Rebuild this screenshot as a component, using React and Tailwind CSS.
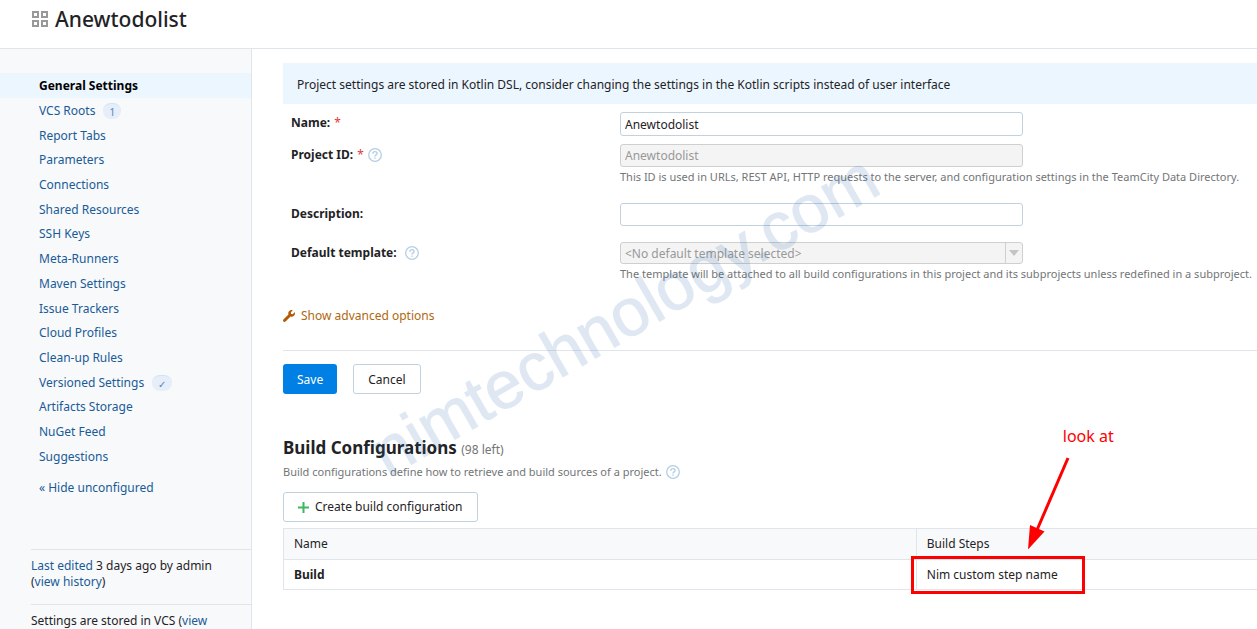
const navItems = [
  { label: 'General Settings', active: true },
  { label: 'VCS Roots', badge: '1' },
  { label: 'Report Tabs' },
  { label: 'Parameters' },
  { label: 'Connections' },
  { label: 'Shared Resources' },
  { label: 'SSH Keys' },
  { label: 'Meta-Runners' },
  { label: 'Maven Settings' },
  { label: 'Issue Trackers' },
  { label: 'Cloud Profiles' },
  { label: 'Clean-up Rules' },
  { label: 'Versioned Settings', badge: '✓' },
  { label: 'Artifacts Storage' },
  { label: 'NuGet Feed' },
  { label: 'Suggestions' },
]

const inputClass = 'block w-[403px] max-w-full rounded-[3px] border px-1'

const ProjectIcon = () => (
  <svg width="17" height="17" viewBox="0 0 17 17" fill="none" stroke="#999" strokeWidth="2" aria-hidden="true">
    <rect x="1" y="1" width="5" height="5" />
    <rect x="10" y="1" width="5" height="5" />
    <rect x="1" y="10" width="5" height="5" />
    <rect x="10" y="10" width="5" height="5" />
  </svg>
)

const HelpIcon = () => (
  <svg width="14" height="14" viewBox="0 0 14 14" fill="none" stroke="#b4cee4" aria-hidden="true">
    <circle cx="7" cy="7" r="6.3" strokeWidth="1.3" />
    <path d="M4.900 5.700c0-1.300.9-2.100 2.100-2.100s2.100.8 2.100 1.900c0 1.500-2.100 1.400-2.100 3" strokeWidth="1.4" />
    <path d="M7 9.400v1.400" strokeWidth="1.5" />
  </svg>
)

const WrenchIcon = () => (
  <svg width="12" height="12" viewBox="0 0 512 512" fill="#b35a00" aria-hidden="true">
    <path d="M507.700 109.100c-2.200-9-13.500-12.100-20.100-5.500l-74.400 74.400-67.900-11.300-11.300-67.900 74.400-74.400c6.600-6.600 3.400-17.900-5.700-20.200-47.400-11.700-99.600.9-136.600 37.900-39.600 39.600-50.500 97.100-34.100 147.200L18.700 402.800c-25 25-25 65.500 0 90.500s65.500 25 90.500 0l213.200-213.200c50.100 16.700 107.500 5.700 147.400-34.200 37.100-37.100 49.700-89.300 37.900-136.800z" />
  </svg>
)

const HelpButton = ({ label }) => (
  <button type="button" aria-label={label} className="inline-flex">
    <HelpIcon />
  </button>
)

const Sidebar = () => (
  <aside className="flex w-[252px] shrink-0 flex-col border-r border-[#dfe5eb] bg-[#f7f9fb] pt-6">
    <ul className="grid h-[395px]">
      {navItems.map((item) => (
        <li key={item.label} className={`flex items-center gap-2 pt-0.5 pl-[39px] ${item.active ? 'bg-[#ebf6ff]' : ''}`}>
          <a href="#" className={item.active ? 'font-bold text-black' : 'text-[#1a5b97]'}>
            {item.label}
          </a>
          {item.badge && (
            <span className="h-4 rounded-full border-t border-[#d3e2f3] bg-[#e5eef9] px-1.5 text-[10px] leading-4 text-[#5c82b8]">
              {item.badge}
            </span>
          )}
        </li>
      ))}
    </ul>
    <a href="#" className="mt-2.5 pl-[39px] leading-5 text-[#1a5b97]">
      « Hide unconfigured
    </a>
    <div className="mt-[51px] ml-[31px] border-t border-[#dfe5eb] pt-2 pb-3.5 leading-4">
      <a href="#" className="text-[#1a5b97]">Last edited</a> 3 days ago by admin
      <br />(<a href="#" className="text-[#1a5b97]">view history</a>)
    </div>
    <div className="ml-[31px] border-t border-[#dfe5eb] pt-2 leading-4">
      Settings are stored in VCS (<a href="#" className="text-[#1a5b97]">view</a>
    </div>
  </aside>
)

const Field = ({ id, label, required, help, note, className, children }) => (
  <div className={`flex pl-2 ${className}`}>
    <div className="flex h-[22px] w-[329px] shrink-0 items-center">
      <label htmlFor={id} className="font-bold">{label}</label>
      {required && <span className="px-1 text-[#e03a3a]">*</span>}
      {help && (
        <span className={required ? 'flex' : 'flex pl-2'}>
          <HelpButton label={`Help: ${label}`} />
        </span>
      )}
    </div>
    <div className="min-w-0 flex-1">
      {children}
      {note && <p className="pt-0.5 text-[11px] leading-4 whitespace-nowrap text-[#737577]">{note}</p>}
    </div>
  </div>
)

const SettingsForm = () => (
  <form>
    <Field id="name" label="Name:" required className="pt-2">
      <input id="name" defaultValue="Anewtodolist" className={`${inputClass} h-6 border-[#c0d1df]`} />
    </Field>
    <Field id="project-id" label="Project ID:" required help className="pt-2" note="This ID is used in URLs, REST API, HTTP requests to the server, and configuration settings in the TeamCity Data Directory.">
      <input id="project-id" disabled defaultValue="Anewtodolist" className={`${inputClass} h-[23px] border-[#cfcfcf] bg-[#f4f4f4] text-[#999]`} />
    </Field>
    <Field id="description" label="Description:" className="pt-[18px]">
      <input id="description" className={`${inputClass} h-[23px] border-[#c0d1df]`} />
    </Field>
    <Field id="template" label="Default template:" help className="pt-4" note="The template will be attached to all build configurations in this project and its subprojects unless redefined in a subproject.">
      <div className="relative w-[403px] max-w-full">
        <select id="template" disabled className={`${inputClass} h-[22px] appearance-none border-[#cfcfcf] bg-[#f4f4f4] pt-0.5 text-[#999]`}>
          <option>&lt;No default template selected&gt;</option>
        </select>
        <span className="pointer-events-none absolute inset-y-px right-px flex w-[17px] items-center justify-center border-l border-[#cfcfcf]">
          <svg width="10" height="6" viewBox="0 0 10 6" fill="#c4c4c4" aria-hidden="true">
            <path d="M0 0h10L5 6z" />
          </svg>
        </span>
      </div>
    </Field>
    <button type="button" className="mt-6 flex h-5 items-center gap-1.5 text-[#b0680f]">
      <WrenchIcon />
      Show advanced options
    </button>
    <div className="mt-6 flex gap-4 border-t border-[#dfe5eb] pt-[13px]">
      <button type="submit" className="h-[30px] rounded-[3px] bg-[#0080e5] px-3.5 pt-0.5 text-white">Save</button>
      <button type="button" className="h-[30px] rounded-[3px] border border-[#c0d1df] px-3.5 pt-0.5">Cancel</button>
    </div>
  </form>
)

const BuildConfigurations = () => (
  <section className="pt-10">
    <h2 className="text-[17px] leading-7 font-bold">
      Build Configurations <span className="text-[12px] font-normal text-[#737577]">(98 left)</span>
    </h2>
    <div className="flex h-4 items-center gap-1 text-[11px] text-[#737577]">
      Build configurations define how to retrieve and build sources of a project.
      <HelpButton label="Help: build configurations" />
    </div>
    <button type="button" className="mt-3 flex h-[30px] items-center gap-1.5 rounded-[3px] border border-[#c0d1df] px-3.5">
      <svg width="11" height="11" viewBox="0 0 11 11" stroke="#3db860" strokeWidth="2" aria-hidden="true">
        <path d="M5.500 0v11M0 5.500h11" />
      </svg>
      Create build configuration
    </button>
    <table className="mt-1.5 w-full border-collapse border border-r-0 border-[#dfe5eb] text-left">
      <thead>
        <tr className="h-[31px] border-b border-[#dfe5eb] bg-[#f7f9fb]">
          <th className="w-[65%] px-2.5 font-normal">Name</th>
          <th className="border-l border-[#dfe5eb] px-2.5 font-normal">Build Steps</th>
        </tr>
      </thead>
      <tbody>
        <tr className="h-[30px]">
          <td className="px-2.5 font-bold">Build</td>
          <td className="relative border-l border-[#dfe5eb] px-2.5">
            Nim custom step name
            <StepCallout />
          </td>
        </tr>
      </tbody>
    </table>
  </section>
)

const StepCallout = () => (
  <div className="pointer-events-none absolute -top-1 -left-[6px] h-[38px] w-[174px] border-3 border-[#fe0000]">
    <span className="absolute bottom-[145px] left-[149px] text-[16px] leading-5 whitespace-nowrap text-[#fe0000]">look at</span>
    <svg width="50" height="94" viewBox="0 0 50 94" className="absolute -top-[103px] left-[108px]" aria-hidden="true">
      <path d="M46 2L15 74" stroke="#fe0000" strokeWidth="3" />
      <path d="M6 93.500L8 69l14.500 6.500z" fill="#fe0000" />
    </svg>
  </div>
)

const Watermark = () => (
  <svg width="600" height="440" viewBox="0 0 600 440" className="pointer-events-none absolute top-[92px] left-[350px] opacity-15" aria-hidden="true">
    <text x="38" y="386" transform="rotate(-30 38 386)" fontSize="67" fontFamily="Liberation Sans, Arial, sans-serif" fill="#2f6dad" stroke="#2f6dad" strokeWidth="1">
      nimtechnology.com
    </text>
  </svg>
)

const App = () => {
  return (
    <div className="relative flex h-screen flex-col overflow-hidden bg-white font-['Noto_Sans',sans-serif] text-[12px] text-[#1f2326]">
      <header className="flex h-[49px] shrink-0 items-center gap-1.5 border-b border-[#dfe5eb] pb-2.5 pl-8">
        <ProjectIcon />
        <h1 className="text-[21px] leading-8 font-medium">Anewtodolist</h1>
      </header>
      <div className="flex flex-1">
        <Sidebar />
        <main className="min-w-0 flex-1 pt-3.5 pl-[31px]">
          <p className="bg-[#ebf6ff] px-3.5 pt-[11px] pb-[9px] leading-[21px]">
            Project settings are stored in Kotlin DSL, consider changing the settings in the Kotlin scripts instead of user interface
          </p>
          <SettingsForm />
          <BuildConfigurations />
        </main>
      </div>
      <Watermark />
    </div>
  )
}

export default App
